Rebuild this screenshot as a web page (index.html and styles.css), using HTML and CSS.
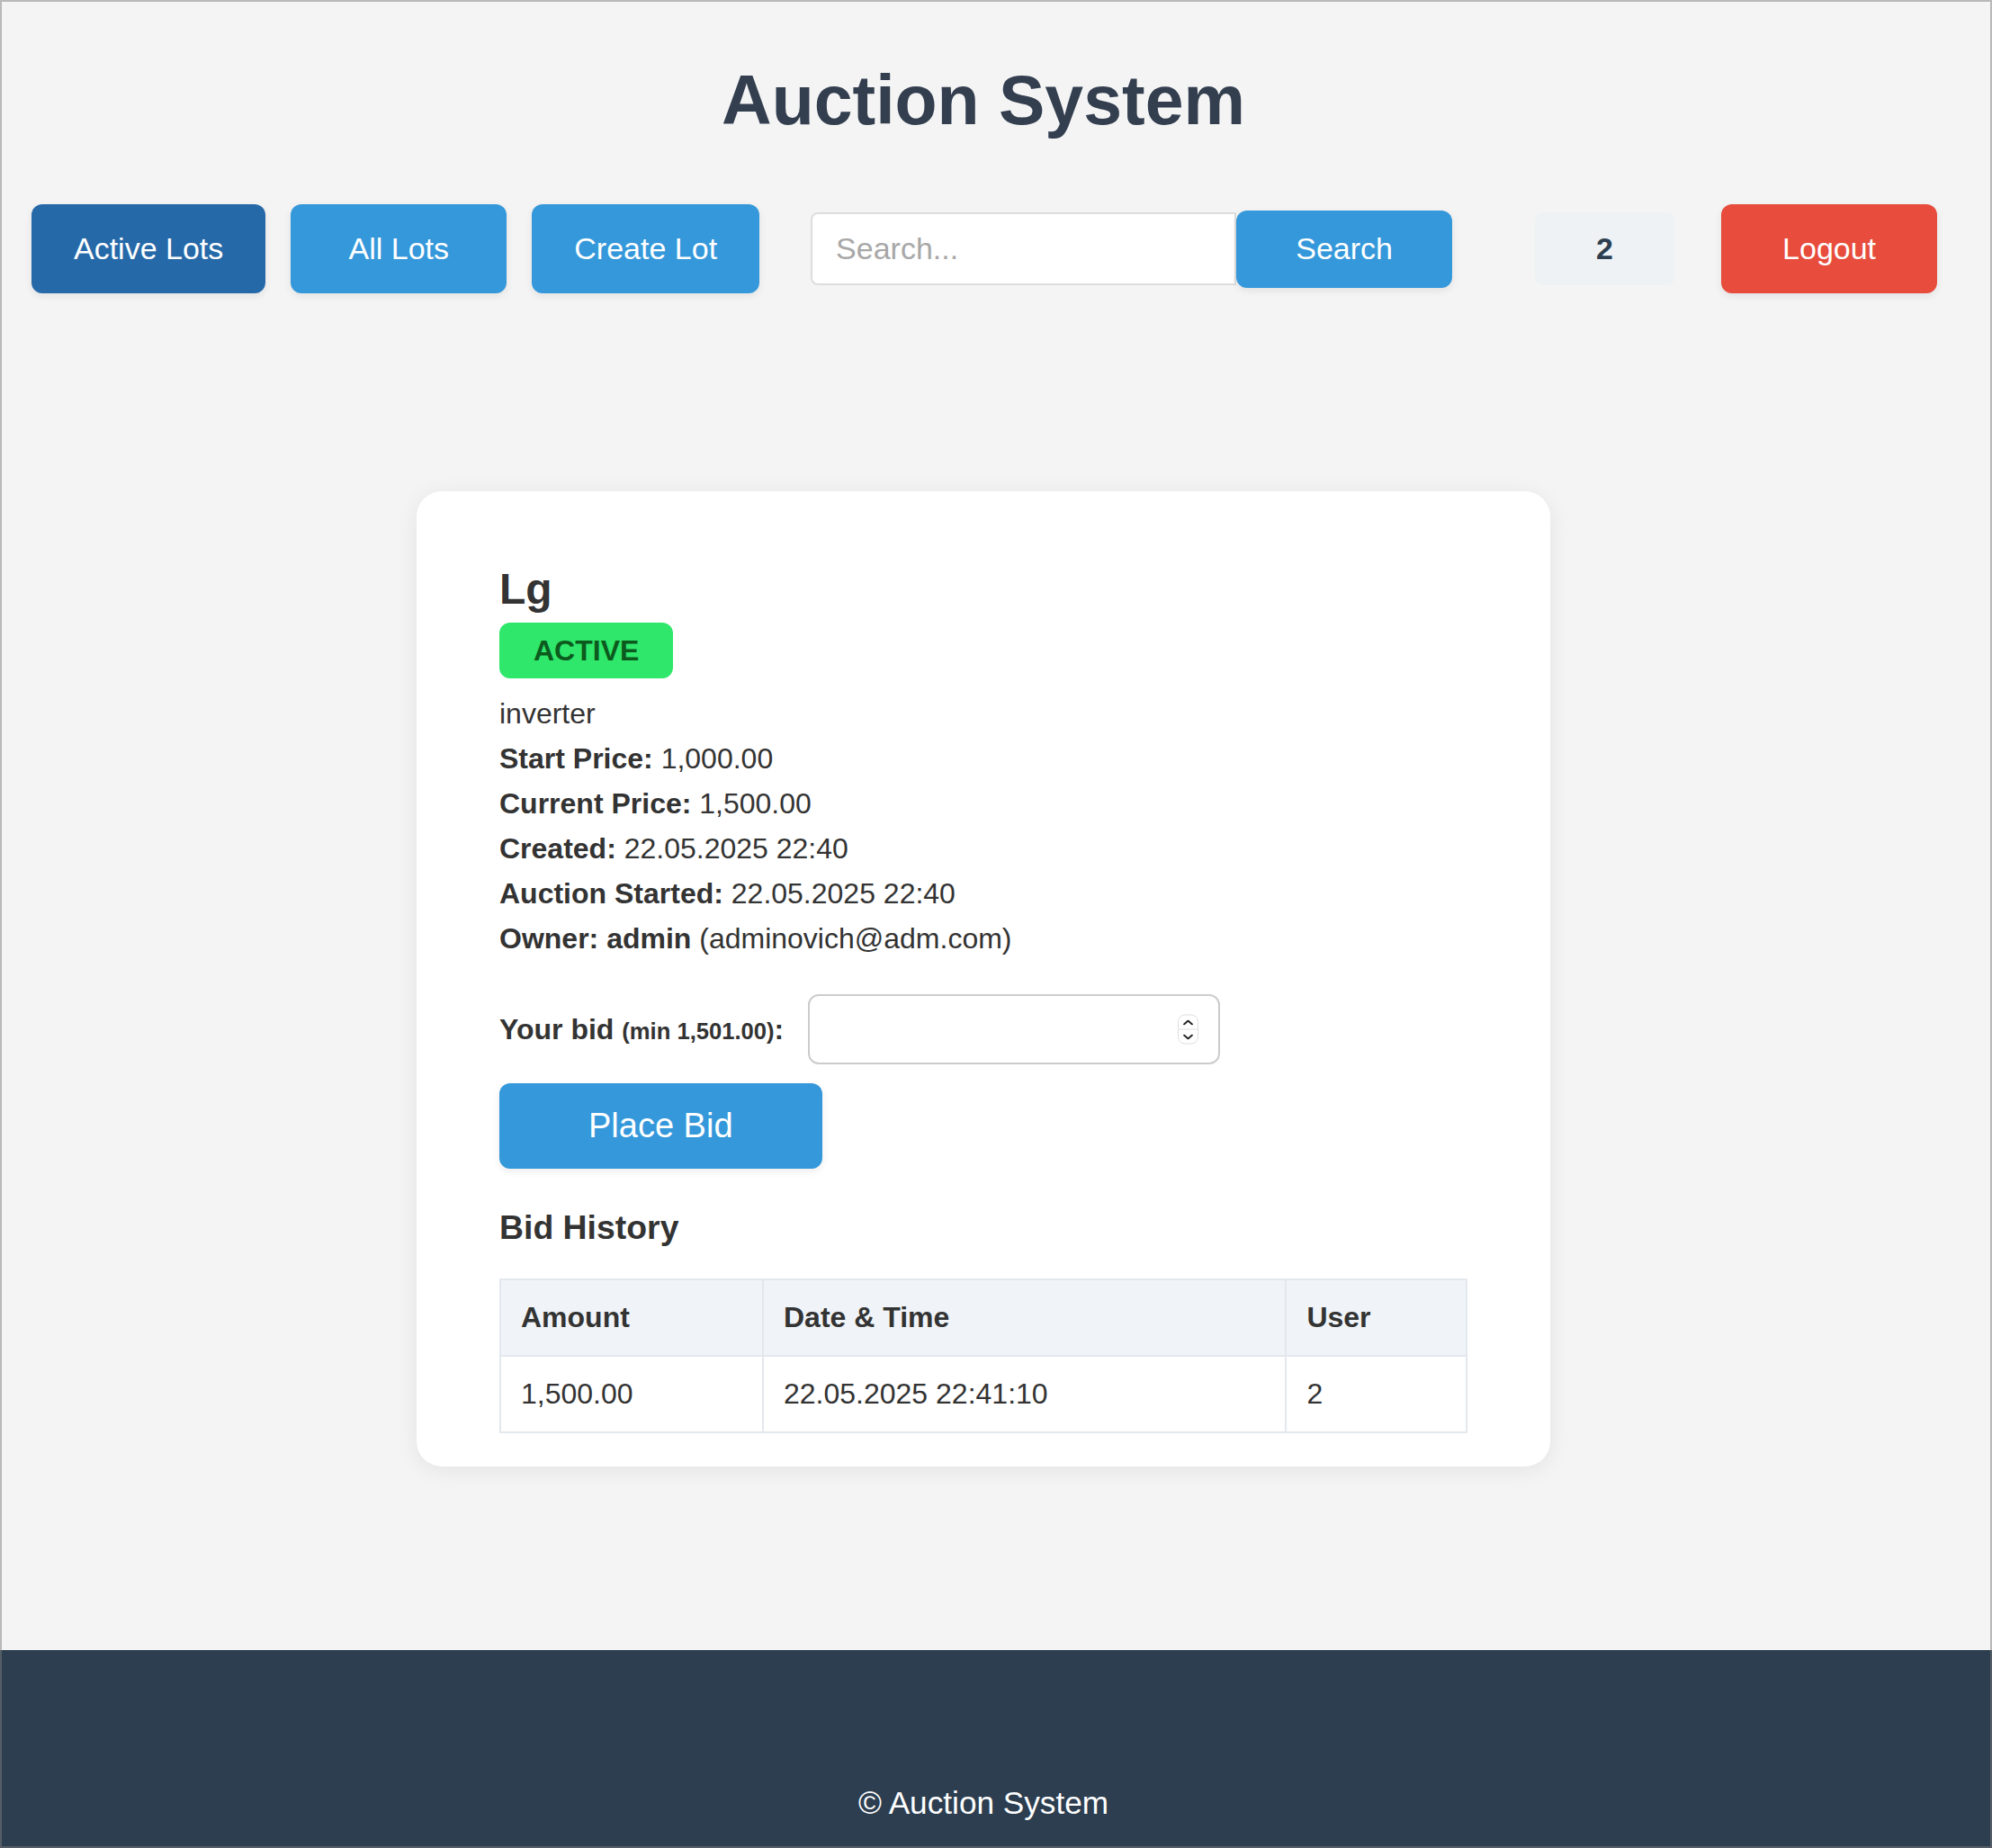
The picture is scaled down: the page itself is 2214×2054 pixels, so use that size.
FILE: index.html
```html
<!DOCTYPE html>
<html lang="en">
<head>
<meta charset="utf-8">
<title>Auction System</title>
<link rel="stylesheet" href="styles.css">
</head>
<body>
<div class="page">
  <header class="site-header">
    <h1 class="site-title">Auction System</h1>
    <nav class="nav">
      <a class="btn btn-active">Active Lots</a>
      <a class="btn">All Lots</a>
      <a class="btn">Create Lot</a>
      <form class="search">
        <input class="search-input" type="text" placeholder="Search...">
        <button class="btn btn-search" type="button">Search</button>
      </form>
      <span class="user-id">2</span>
      <a class="btn btn-logout">Logout</a>
    </nav>
  </header>

  <main class="main">
    <section class="card">
      <h2 class="lot-title">Lg</h2>
      <span class="badge">ACTIVE</span>
      <div class="details">
        <p>inverter</p>
        <p><strong>Start Price:</strong> 1,000.00</p>
        <p><strong>Current Price:</strong> 1,500.00</p>
        <p><strong>Created:</strong> 22.05.2025 22:40</p>
        <p><strong>Auction Started:</strong> 22.05.2025 22:40</p>
        <p><strong>Owner: admin</strong> (adminovich@adm.com)</p>
      </div>

      <form class="bid-form">
        <div class="bid-row">
          <label class="bid-label">Your bid <small>(min 1,501.00)</small>:</label>
          <div class="bid-field">
            <input class="bid-input" type="number">
            <span class="stepper">
              <span class="step step-up"><svg width="11" height="6" viewBox="0 0 11 6"><polyline points="1,5 5.5,1 10,5" fill="none" stroke="#222" stroke-width="1.8" stroke-linecap="round" stroke-linejoin="round"/></svg></span>
              <span class="step"><svg width="11" height="6" viewBox="0 0 11 6"><polyline points="1,1 5.5,5 10,1" fill="none" stroke="#222" stroke-width="1.8" stroke-linecap="round" stroke-linejoin="round"/></svg></span>
            </span>
          </div>
        </div>
        <button class="btn btn-bid" type="button">Place Bid</button>
      </form>

      <h3 class="history-title">Bid History</h3>
      <table class="history">
        <thead>
          <tr><th>Amount</th><th>Date &amp; Time</th><th>User</th></tr>
        </thead>
        <tbody>
          <tr><td>1,500.00</td><td>22.05.2025 22:41:10</td><td>2</td></tr>
        </tbody>
      </table>
    </section>
  </main>
</div>

<footer class="footer">
  <p>© Auction System</p>
</footer>
</body>
</html>
```

FILE: styles.css
```css
html, body {
  margin: 0;
  padding: 0;
}

body {
  background: #f4f4f4;
  font-family: "Liberation Sans", Arial, Helvetica, sans-serif;
  color: #333;
}

body::after {
  content: "";
  position: fixed;
  inset: 0;
  border: 2px solid rgba(125, 125, 125, 0.5);
  pointer-events: none;
}

.page {
  padding-right: 28px;
}

.site-title {
  margin: 0;
  padding-top: 67px;
  font-size: 77px;
  font-weight: bold;
  text-align: center;
  color: #333e4f;
}

.nav {
  display: flex;
  align-items: center;
  margin-top: 71px;
  padding-left: 35px;
}

.btn {
  display: inline-block;
  box-sizing: border-box;
  min-width: 240px;
  padding: 30px 47px;
  border: 0;
  border-radius: 12px;
  background: #3498db;
  color: #fff;
  font-family: inherit;
  font-size: 34px;
  line-height: 39px;
  text-align: center;
  text-decoration: none;
  box-shadow: 0 3px 8px rgba(0, 0, 0, 0.08);
  cursor: pointer;
}

.nav > .btn + .btn {
  margin-left: 28px;
}

.btn-active {
  background: #2669a9;
}

.search {
  display: flex;
  align-items: center;
  margin: 0 0 0 57px;
}

.search-input {
  box-sizing: border-box;
  width: 473px;
  height: 81px;
  padding: 0 26px;
  border: 2px solid #ddd;
  border-radius: 8px 0 0 8px;
  background: #fff;
  font-family: inherit;
  font-size: 34px;
  color: #333;
  outline: none;
}

.search-input::placeholder {
  color: #a8a8a8;
}

.btn-search {
  height: 86px;
  padding-top: 0;
  padding-bottom: 0;
}

.user-id {
  display: flex;
  align-items: center;
  justify-content: center;
  box-sizing: border-box;
  width: 155px;
  height: 81px;
  margin-left: 92px;
  border-radius: 8px;
  background: #eef2f5;
  color: #2c3e50;
  font-size: 34px;
  font-weight: bold;
}

.btn-logout {
  margin-left: 52px;
  background: #e74c3c;
}

.card {
  box-sizing: border-box;
  width: 1260px;
  margin: 220px auto 0;
  padding: 81px 92px 37px;
  border-radius: 28px;
  background: #fff;
  box-shadow: 0 4px 24px rgba(0, 0, 0, 0.07);
}

.lot-title {
  margin: 0;
  font-size: 48px;
  line-height: 55px;
  color: #333;
}

.badge {
  display: block;
  width: fit-content;
  margin-top: 10px;
  padding: 12px 38px;
  border-radius: 12px;
  background: #2ee76b;
  color: #0c5a1d;
  font-size: 32px;
  font-weight: bold;
  line-height: 38px;
}

.details {
  margin-top: 14px;
}

.details p {
  margin: 0;
  font-size: 32px;
  line-height: 50px;
}

.bid-form {
  margin-top: 37px;
}

.bid-row {
  display: flex;
  align-items: center;
  gap: 27px;
}

.bid-label {
  font-size: 32px;
  font-weight: bold;
  color: #333;
}

.bid-label small {
  font-size: 25.6px;
}

.bid-field {
  position: relative;
}

.bid-input {
  box-sizing: border-box;
  width: 458px;
  height: 78px;
  padding: 0 20px;
  border: 2px solid #ccc;
  border-radius: 12px;
  background: #fff;
  font-family: inherit;
  font-size: 32px;
  outline: none;
  -moz-appearance: textfield;
}

.bid-input::-webkit-inner-spin-button,
.bid-input::-webkit-outer-spin-button {
  -webkit-appearance: none;
  margin: 0;
}

.stepper {
  position: absolute;
  right: 24px;
  top: 50%;
  transform: translateY(-50%);
  box-sizing: border-box;
  width: 23px;
  height: 33px;
  display: flex;
  flex-direction: column;
  border: 1px solid #dedede;
  border-radius: 8px;
  background: #fff;
}

.step {
  flex: 1;
  display: flex;
  align-items: center;
  justify-content: center;
}

.step-up {
  border-bottom: 1px solid #e2e2e2;
}

.btn-bid {
  display: block;
  min-width: 0;
  margin-top: 21px;
  padding: 25px 99px;
  font-size: 38px;
  line-height: 45px;
}

.history-title {
  margin: 44px 0 35px;
  font-size: 37.4px;
  line-height: 43px;
  color: #333;
}

.history {
  width: 100%;
  border-collapse: collapse;
  font-size: 32px;
}

.history th,
.history td {
  padding: 23px 22px;
  border: 2px solid #e3e8ee;
  text-align: left;
  line-height: 37px;
}

.history th {
  background: #f0f4f8;
  font-weight: bold;
}

.footer {
  margin-top: 204px;
  padding: 150px 28px 30px 0;
  background: #2c3e50;
  color: #fff;
  text-align: center;
}

.footer p {
  margin: 0;
  font-size: 35.2px;
  line-height: 40px;
}
```
